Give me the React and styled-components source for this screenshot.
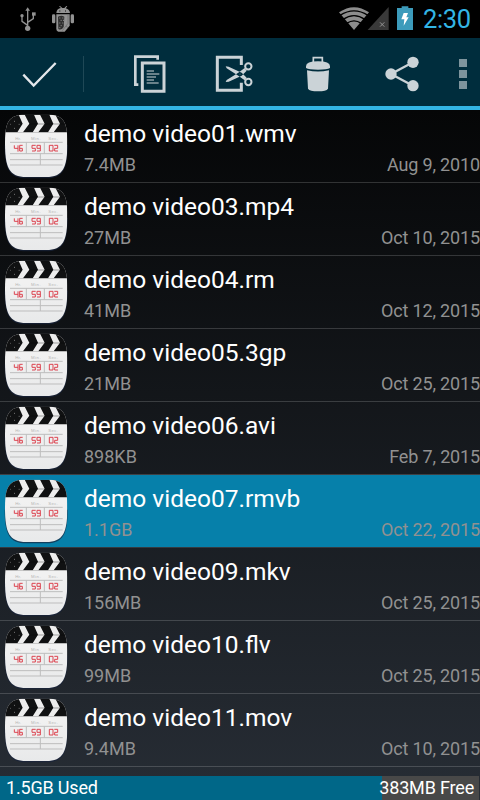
import React from 'react';
import styled, { createGlobalStyle } from 'styled-components';

const GlobalStyle = createGlobalStyle`
  * {
    box-sizing: border-box;
  }

  body {
    margin: 0;
    background: #000;
    font-family: Roboto, "Liberation Sans", sans-serif;
  }

  svg {
    display: block;
    flex: none;
  }
`;

const Screen = styled.div`
  width: 480px;
  height: 800px;
  display: flex;
  flex-direction: column;
  overflow: hidden;
  background: linear-gradient(#000 38px, #050607 110px, #272d35 800px);
`;

const StatusBar = styled.header`
  height: 38px;
  flex: none;
  display: flex;
  justify-content: space-between;
  background: #000;
`;

const StatusGroup = styled.div`
  display: flex;
`;

const Clock = styled.span`
  width: 62px;
  padding-left: 5px;
  font-size: 25.5px;
  line-height: 39px;
  letter-spacing: -0.4px;
  color: #33b5e5;
`;

const ActionBar = styled.nav`
  height: 72px;
  flex: none;
  display: flex;
  align-items: stretch;
  background: #002d3d;
  border-bottom: 4px solid #33b5e5;
`;

const Action = styled.button`
  width: ${props => props.$width || 84}px;
  padding: 0;
  border: 0;
  background: none;
`;

const Separator = styled.div`
  width: 1px;
  height: 36px;
  margin: 18px 24px 0 0;
  background: #1f4856;
`;

const FileList = styled.ul`
  flex: 1;
  margin: 0;
  padding: 0;
  list-style: none;
`;

const FileRow = styled.li`
  height: 73px;
  display: flex;
  background: ${props => (props.$selected ? '#0680aa' : 'transparent')};
  background-clip: padding-box;
  border-bottom: 1px solid ${props => (props.$selected ? '#343a40' : 'rgba(255, 255, 255, 0.17)')};
`;

const FileInfo = styled.div`
  flex: 1;
  padding-top: 8px;
`;

const FileName = styled.div`
  height: 32px;
  font-size: 24.5px;
  line-height: 32px;
  white-space: nowrap;
  color: #fff;
`;

const FileMeta = styled.div`
  display: flex;
  justify-content: space-between;
  padding-top: 4px;
  font-size: 18px;
  line-height: 22px;
  color: #919191;
`;

const FileDate = styled.span`
  letter-spacing: -0.15px;
`;

const StorageBar = styled.footer`
  height: 24px;
  flex: none;
  display: flex;
  justify-content: space-between;
  margin-right: 1px;
  padding: 0 5px 0 6px;
  background: linear-gradient(90deg, #006788 382px, #484848 382px);
  font-size: 18px;
  line-height: 24px;
  letter-spacing: -0.18px;
  color: #fff;
`;

const UsbIcon = () => (
  <svg width="48" height="38" viewBox="0 0 144 114" fill="none" stroke="#929292" strokeWidth="4">
    <path d="M83 28v56M83 76L66 64V49M83 67l17-11V42" />
    <path d="M83 22l7 10H76z" fill="#929292" stroke="none" />
    <circle cx="83" cy="85" r="8" fill="#929292" stroke="none" />
    <circle cx="66" cy="47" r="5" fill="#929292" stroke="none" />
    <path d="M96 37h11v10H96z" fill="#929292" stroke="none" />
  </svg>
);

const DebugIcon = () => (
  <svg width="32" height="38" viewBox="144 0 96 114" fill="#929292">
    <path d="M169 39q1-13 14-15l-6-5 3-1 7 6h6l6-6 3 1-5 6q12 3 13 14z" />
    <rect x="156" y="43" width="10" height="27" rx="4" />
    <rect x="212" y="43" width="10" height="27" rx="4" />
    <path d="M169 43h40v34l-15 18h-19q-6-2-6-8z" />
    <path d="M174 50q11-5 19 0l-2 31q-7 11-16 6z" fill="#303030" />
    <path d="M178 54h3m6 0h3m-8 7h3m4 0h3m-14 8h3m6 0h3m-8 8h3m-7 6h3" stroke="#929292" strokeWidth="3" />
    <path d="M204 45v25l-17 22M198 78l6 5" stroke="#666" strokeWidth="2" fill="none" />
    <path d="M178 33h3m14 0h3" stroke="#111" strokeWidth="3" />
  </svg>
);

const SignalIcons = () => (
  <svg width="82" height="38" viewBox="168 0 246 114">
    <g transform="translate(-9)">
      <path d="M186 37q45-31 90 0l-45 53z" fill="#8d8d8d" />
      <path d="M189 46q42-27 84 0M198 58q33-22 66 0M209 70q22-15 44 0" fill="none" stroke="#000" strokeWidth="4" />
    </g>
    <path d="M326 21v69h-63z" fill="#393939" />
    <path d="M300 67l13 13m0-13l-13 13" stroke="#969696" strokeWidth="3" />
    <path d="M351 24h14v-5h20v5h14v66h-48z" fill="#3c9bbb" />
    <path d="M371 39h13l-5 13h7l-15 25 2-19h-9z" fill="#fff" />
  </svg>
);

const CheckIcon = () => (
  <svg width="83" height="68" viewBox="0 114 249 204">
    <path d="M70 224l31 33 66-68" fill="none" stroke="#e4e7eb" strokeWidth="7" />
  </svg>
);

const CopyIcon = () => (
  <svg width="84" height="68" viewBox="-36 114 252 204">
    <path d="M55 254h-9v-84h67v9" fill="none" stroke="#cbd3d7" strokeWidth="8" />
    <path d="M67 189h65v85H67z" fill="none" stroke="#cbd3d7" strokeWidth="9" />
    <path d="M80 213h22m-22 9h38m-38 9h28m-28 9h22m-22 9h36" stroke="#8a9da4" strokeWidth="5" />
  </svg>
);

const CutIcon = () => (
  <svg width="84" height="68" viewBox="216 114 252 204" fill="none" stroke="#cbd3d7">
    <path d="M364 195v-23h-72v99h72v-23" strokeWidth="9" />
    <circle cx="385" cy="199" r="9.5" strokeWidth="6" />
    <circle cx="385" cy="246" r="9.5" strokeWidth="6" />
    <path d="M317 199l9 1 39 18 15 15-6 8-19-14-35-22zM317 246l9-1 39-18 15-15-6-8-19 14-35 22z" fill="#cbd3d7" stroke="none" />
    <circle cx="360" cy="222.5" r="2.5" fill="#234b58" stroke="none" />
  </svg>
);

const TrashIcon = () => (
  <svg width="84" height="68" viewBox="-12 114 252 204" fill="#cbd3d7">
    <path d="M100 188v-15h27v15" fill="none" stroke="#cbd3d7" strokeWidth="5" />
    <path d="M78 199q0-15 36-15t36 15v5q-8 5-36 5t-36-5z" />
    <path d="M81 211q33 7 66 0l-3 55q-5 8-30 8t-30-8z" />
  </svg>
);

const ShareIcon = () => (
  <svg width="84" height="68" viewBox="240 114 252 204" fill="#cbd3d7">
    <path d="M399 187l-66 35 66 35" fill="none" stroke="#cbd3d7" strokeWidth="7" />
    <circle cx="399" cy="187" r="17" />
    <circle cx="333" cy="222" r="17" />
    <circle cx="399" cy="257" r="17" />
  </svg>
);

const MoreIcon = () => (
  <svg width="36" height="68" viewBox="492 114 108 204" fill="#7e949d">
    <path d="M537 177h24v24h-24zM537 210h24v24h-24zM537 243h24v24h-24z" />
  </svg>
);

const ThumbText = styled.text`
  font-family: "Liberation Sans", sans-serif;
  font-size: ${props => props.$size}px;
  fill: ${props => props.$color};
`;

const VideoThumb = () => (
  <svg width="84" height="72" viewBox="0 6 252 216">
    <defs>
      <linearGradient id="slate" x2="0" y2="1">
        <stop offset="0.35" stopColor="#f1f1f1" />
        <stop offset="1" stopColor="#e8e9ea" />
      </linearGradient>
      <clipPath id="slateShape">
        <path d="M15 104C15 42 26 20 75 20h68c49 0 59 22 59 84 0 74-12 103-64 103H79C27 207 15 178 15 104z" />
      </clipPath>
    </defs>
    <path d="M14 110C14 182 27 211 79 211h59c52 0 65-29 65-101z" fill="#18233c" opacity="0.7" />
    <g clipPath="url(#slateShape)">
      <path d="M12 18h194v192H12z" fill="url(#slate)" />
      <path d="M12 18h194v55H12z" fill="#101112" />
      <path d="M55 18h18l15 29-19 26H52l16-26zM101 18h18l15 29-19 26H98l16-26zM147 18h18l15 29-19 26h-17l16-26z" fill="#ededed" />
      <path d="M88 48h115" stroke="#000" strokeWidth="1" />
    </g>
    <path d="M42 40h3m-3 21h3m11-12h3m-28 0h2" stroke="#777" strokeWidth="3" />
    <path d="M30 103h158M30 137h158M30 155h158M30 171h158M79 103v34M133 103v34M121 137v34" stroke="#bdbdbd" strokeWidth="3" />
    <ThumbText x="46" y="96" $size={13} $color="#b6b6b6">Hr.</ThumbText>
    <ThumbText x="93" y="96" $size={13} $color="#b6b6b6" textLength="29">Min.</ThumbText>
    <ThumbText x="145" y="96" $size={13} $color="#b6b6b6" textLength="29">Sec.</ThumbText>
    <g fill="none" stroke="#dc4450" strokeWidth="3">
      <path d="M43 112v9h11m0-9v19M68 112h-9v17h8v-8h-8" />
      <path d="M107 112H96v9h10v8H96M121 129v-17h-10v9h10M121 129h-10" />
      <path d="M148 112h11v17h-11zM163 112h10v9h-9v8h10" />
    </g>
  </svg>
);

const files = [
  { name: 'demo video01.wmv', size: '7.4MB', date: 'Aug 9, 2010' },
  { name: 'demo video03.mp4', size: '27MB', date: 'Oct 10, 2015' },
  { name: 'demo video04.rm', size: '41MB', date: 'Oct 12, 2015' },
  { name: 'demo video05.3gp', size: '21MB', date: 'Oct 25, 2015' },
  { name: 'demo video06.avi', size: '898KB', date: 'Feb 7, 2015' },
  { name: 'demo video07.rmvb', size: '1.1GB', date: 'Oct 22, 2015', selected: true },
  { name: 'demo video09.mkv', size: '156MB', date: 'Oct 25, 2015' },
  { name: 'demo video10.flv', size: '99MB', date: 'Oct 25, 2015' },
  { name: 'demo video11.mov', size: '9.4MB', date: 'Oct 10, 2015' },
];

const App = () => {
  return (
    <>
      <GlobalStyle />
      <Screen>
        <StatusBar>
          <StatusGroup>
            <UsbIcon />
            <DebugIcon />
          </StatusGroup>
          <StatusGroup>
            <SignalIcons />
            <Clock>2:30</Clock>
          </StatusGroup>
        </StatusBar>
        <ActionBar>
          <Action $width={83} aria-label="Done"><CheckIcon /></Action>
          <Separator />
          <Action aria-label="Copy"><CopyIcon /></Action>
          <Action aria-label="Cut"><CutIcon /></Action>
          <Action aria-label="Delete"><TrashIcon /></Action>
          <Action aria-label="Share"><ShareIcon /></Action>
          <Action $width={36} aria-label="More"><MoreIcon /></Action>
        </ActionBar>
        <FileList>
          {files.map(file => (
            <FileRow key={file.name} $selected={file.selected}>
              <VideoThumb />
              <FileInfo>
                <FileName>{file.name}</FileName>
                <FileMeta>
                  <span>{file.size}</span>
                  <FileDate>{file.date}</FileDate>
                </FileMeta>
              </FileInfo>
            </FileRow>
          ))}
        </FileList>
        <StorageBar>
          <span>1.5GB Used</span>
          <span>383MB Free</span>
        </StorageBar>
      </Screen>
    </>
  );
};

export default App;
